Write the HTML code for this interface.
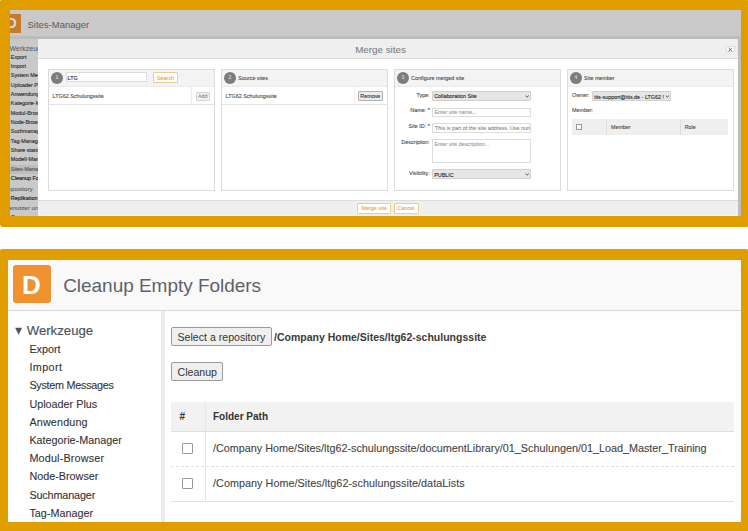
<!DOCTYPE html>
<html><head><meta charset="utf-8">
<style>
*{box-sizing:border-box;margin:0;padding:0}
html,body{width:748px;height:531px;overflow:hidden;background:#fff;font-family:"Liberation Sans",sans-serif}
.a{position:absolute}
.t{position:absolute;white-space:nowrap;line-height:1}
.full{position:absolute;left:0;top:0;width:748px;height:531px}
#c1{clip-path:inset(10px 7px 315px 10px);background:#c9c9c9;}
#c2{clip-path:inset(260px 7px 9px 8px);background:#fff}
.s2{font-size:10.8px;color:#333;-webkit-text-stroke:0.1px currentColor}
.s1{font-size:5.4px;color:#4a4a4a;-webkit-text-stroke:0.1px currentColor}
.sb{color:#333;-webkit-text-stroke:0.15px currentColor}
.lab{width:50px;text-align:right}
.pan{position:absolute;top:69px;width:167px;height:122px;border:1px solid #dcdcdc;background:#fff}
.phd{position:absolute;top:70px;width:165px;height:17px;background:#f3f3f3;border-bottom:1px dotted #e2e2e2}
.circ{position:absolute;top:72px;width:12px;height:12px;border-radius:50%;background:#7c7c7c}
.inp1{position:absolute;background:#fff;border:0.8px solid #dcdcdc}
.sel1{position:absolute;background:#e6e6e6;border:0.8px solid #d0d0d0;border-radius:1px}
.btn1o{position:absolute;background:#fff;border:0.9px solid #eccb94;border-radius:1px}
.rowl{position:absolute;height:1px;background:#e2e2e2}
.btn2{position:absolute;background:#efefef;border:1px solid #9a9a9a;border-radius:2px}
.cb2{position:absolute;width:11px;height:11px;border:1px solid #999;background:#fff;border-radius:1px}
</style></head><body>
<div class="a" style="left:0;top:0;width:748px;height:227px;background:#df9d00;border-radius:1.5px 1px 1.5px 3px"></div>
<div class="a" style="left:0;top:249px;width:748px;height:282px;background:#df9d00;border-radius:2px 1.5px 0 0"></div>

<div id="c1" class="full">
  <!-- header -->
  <div class="a" style="left:0;top:36px;width:748px;height:2.5px;background:#bcbcbc"></div>
  <div class="a" style="left:2.2px;top:13.6px;width:19px;height:19.3px;background:#c77a2b"></div>
  <div class="t" style="left:6.3px;top:16.4px;font-size:14.5px;font-weight:bold;color:#dcdcdc">D</div>
  <div class="t" style="left:27.5px;top:19.8px;font-size:9.5px;color:#595959">Sites-Manager</div>
  <!-- sidebar -->
  <div class="t" style="left:9.6px;top:44.8px;font-size:7px;color:#4d5561">Werkzeuge</div>
  <div class="t s1 sb" style="left:10.8px;top:54.5px">Export</div>
  <div class="t s1 sb" style="left:10.8px;top:63.8px">Import</div>
  <div class="t s1 sb" style="left:10.8px;top:73.2px">System Messages</div>
  <div class="t s1 sb" style="left:10.8px;top:82.5px">Uploader Plus</div>
  <div class="t s1 sb" style="left:10.8px;top:91.9px">Anwendung</div>
  <div class="t s1 sb" style="left:10.8px;top:101.2px">Kategorie-Manager</div>
  <div class="t s1 sb" style="left:10.8px;top:110.6px">Modul-Browser</div>
  <div class="t s1 sb" style="left:10.8px;top:119.9px">Node-Browser</div>
  <div class="t s1 sb" style="left:10.8px;top:129.3px">Suchmanager</div>
  <div class="t s1 sb" style="left:10.8px;top:138.6px">Tag-Manager</div>
  <div class="t s1 sb" style="left:10.8px;top:148px">Share stats</div>
  <div class="t s1 sb" style="left:10.8px;top:157.3px">Modell-Manager</div>
  <div class="a" style="left:0;top:165.2px;width:40px;height:8.5px;background:#bdbdbd"></div>
  <div class="t s1 sb" style="left:10.8px;top:166.7px;color:#555">Sites-Manager</div>
  <div class="t s1 sb" style="left:10.8px;top:176px;color:#1a1a1a">Cleanup Folders</div>
  <div class="t" style="left:3.1px;top:186.3px;font-size:6.2px;color:#5a6068;-webkit-text-stroke:0.1px currentColor">Repository</div>
  <div class="t s1 sb" style="left:10.8px;top:196.3px;color:#222">Replikation</div>
  <div class="t" style="left:5px;top:205.4px;font-size:6.2px;color:#5a6068;-webkit-text-stroke:0.1px currentColor">Benutzer und Gruppen</div>
  <div class="t s1 sb" style="left:10.8px;top:215.2px">Gruppen</div>
  <!-- dialog -->
  <div class="a" style="left:738px;top:37px;width:3px;height:190px;background:#bdbdbd"></div>
  <div class="a" style="left:38px;top:39px;width:700px;height:190px;background:#fff;border-radius:2px 2px 0 0;overflow:hidden">
    <div class="a" style="left:0;top:0;width:700px;height:19.5px;background:#efefef;border-bottom:1px solid #dcdcdc"></div>
    <div class="a" style="left:0;top:161px;width:700px;height:30px;background:#efefef;border-top:1px solid #dcdcdc"></div>
    <div class="a" style="left:0;top:176px;width:700px;height:1px;background:#f4f5fa"></div>
  </div>
  <div class="t" style="left:355.2px;top:44.6px;font-size:9.8px;color:#757575">Merge sites</div>
  <div class="a" style="left:725.6px;top:46.4px;width:9.5px;height:6px;background:#fff;border:1px solid #dadada;border-radius:1px"></div>
  <svg class="a" style="left:0;top:0" width="748" height="226"><path d="M728.6 48 L731.9 51.2 M731.9 48 L728.6 51.2" stroke="#555" stroke-width="0.9"/></svg>
  <!-- footer buttons -->
  <div class="btn1o" style="left:356.7px;top:202.5px;width:34.3px;height:11.8px"></div>
  <div class="t s1" style="left:361.5px;top:205.6px;color:#e3a84c">Merge site</div>
  <div class="btn1o" style="left:394px;top:202.5px;width:24.7px;height:11.8px"></div>
  <div class="t s1" style="left:397.6px;top:205.6px;color:#e3a84c">Cancel</div>
  <div class="pan" style="left:48px"></div>
  <div class="phd" style="left:49px"></div>
  <div class="circ" style="left:51px"></div>
  <div class="t s1" style="left:55.6px;top:74.8px;color:#dedede;font-size:5px">1</div>
  <div class="pan" style="left:221px"></div>
  <div class="phd" style="left:222px"></div>
  <div class="circ" style="left:224px"></div>
  <div class="t s1" style="left:228.6px;top:74.8px;color:#dedede;font-size:5px">2</div>
  <div class="pan" style="left:394px"></div>
  <div class="phd" style="left:395px"></div>
  <div class="circ" style="left:397px"></div>
  <div class="t s1" style="left:401.6px;top:74.8px;color:#dedede;font-size:5px">3</div>
  <div class="pan" style="left:567px"></div>
  <div class="phd" style="left:568px"></div>
  <div class="circ" style="left:570px"></div>
  <div class="t s1" style="left:574.6px;top:74.8px;color:#dedede;font-size:5px">4</div>

  <!-- panel 1 -->
  <div class="inp1" style="left:65.7px;top:72.4px;width:81.8px;height:10.1px"></div>
  <div class="t s1" style="left:67.6px;top:75.9px;color:#222">LTG</div>
  <div class="btn1o" style="left:152.8px;top:72px;width:25.2px;height:11.3px"></div>
  <div class="t s1" style="left:157px;top:75.8px;color:#e3a84c">Search</div>
  <div class="rowl" style="left:49px;top:104px;width:165px"></div>
  <div class="a" style="left:191px;top:87px;width:1px;height:17px;background:#ececec"></div>
  <div class="t s1" style="left:52.6px;top:93.7px">LTG62 Schulungssite</div>
  <div class="a" style="left:195.5px;top:91.5px;width:14.5px;height:9px;background:#f3f3f3;border:1px solid #d3d3d3;border-radius:1px"></div>
  <div class="t s1" style="left:198px;top:93.8px;color:#8a8a8a">Add</div>
  <!-- panel 2 -->
  <div class="t s1" style="left:238.3px;top:75.8px">Source sites</div>
  <div class="rowl" style="left:222px;top:104px;width:165px"></div>
  <div class="a" style="left:354px;top:87px;width:1px;height:17px;background:#ececec"></div>
  <div class="t s1" style="left:225.6px;top:93.7px">LTG62 Schulungssite</div>
  <div class="a" style="left:358px;top:91.2px;width:24.8px;height:9.6px;background:#ececec;border:1px solid #b0b0b0;border-radius:1px"></div>
  <div class="t s1" style="left:360.3px;top:93.8px;color:#333">Remove</div>
  <!-- panel 3 -->
  <div class="t s1" style="left:411.1px;top:75.8px">Configure merged site</div>
  <div class="t s1 lab" style="left:379.8px;top:93px">Type:</div>
  <div class="t s1 lab" style="left:379.8px;top:108.2px">Name: *</div>
  <div class="t s1 lab" style="left:379.8px;top:124.1px">Site ID: *</div>
  <div class="t s1 lab" style="left:379.8px;top:140.1px">Description:</div>
  <div class="t s1 lab" style="left:379.8px;top:170.9px">Visibility:</div>
  <div class="sel1" style="left:432.2px;top:91.3px;width:98.5px;height:9.9px"></div>
  <div class="t s1" style="left:434.2px;top:94px;color:#222">Collaboration Site</div>
  <div class="inp1" style="left:432.2px;top:107.5px;width:98.5px;height:9px"></div>
  <div class="t s1" style="left:434.4px;top:109.5px;color:#9a9a9a">Enter site name...</div>
  <div class="inp1" style="left:432.2px;top:123px;width:98.5px;height:9.5px;overflow:hidden"><div class="t s1" style="left:1.8px;top:2.2px;color:#8a8a8a">This is part of the site address. Use numbers</div></div>
  <div class="inp1" style="left:432.2px;top:138.8px;width:98.5px;height:24.5px"></div>
  <div class="t s1" style="left:434.4px;top:142.4px;color:#9a9a9a">Enter site description...</div>
  <div class="sel1" style="left:432.2px;top:169.3px;width:98.5px;height:9.8px"></div>
  <div class="t s1" style="left:434.2px;top:172.5px;color:#222">PUBLIC</div>
  <!-- panel 4 -->
  <div class="t s1" style="left:584.1px;top:75.8px">Site member</div>
  <div class="t s1" style="left:572.1px;top:92.5px">Owner:</div>
  <div class="sel1" style="left:592px;top:91px;width:78.8px;height:10.3px;overflow:hidden"><div class="t s1" style="left:1.2px;top:2.5px;color:#222">itis-support@itis.de - LTG62 !</div></div>
  <div class="t s1" style="left:572.1px;top:108.2px">Member:</div>
  <div class="a" style="left:572.1px;top:119.4px;width:156.4px;height:16.1px;background:#efefef"></div>
  <div class="a" style="left:606.3px;top:119.4px;width:0.6px;height:16.1px;background:#dedede"></div>
  <div class="a" style="left:680.2px;top:119.4px;width:0.6px;height:16.1px;background:#dedede"></div>
  <div class="a" style="left:576px;top:124px;width:6px;height:6px;border:1px solid #9a9a9a;background:#fff"></div>
  <div class="t s1" style="left:610.9px;top:124.7px">Member</div>
  <div class="t s1" style="left:684.7px;top:124.7px">Role</div>
  <svg class="a" style="left:0;top:0" width="748" height="226" fill="none" stroke="#555" stroke-width="1">
    <path d="M525.6 95.6 L527.2 97.1 L528.8 95.6"/>
    <path d="M525.6 173.6 L527.2 175.1 L528.8 173.6"/>
    <path d="M665.8 95.6 L667.4 97.1 L669 95.6"/>
  </svg>
</div>

<div id="c2" class="full">
  <!-- header -->
  <div class="a" style="left:0;top:260px;width:748px;height:51px;background:#f9f9f9;border-bottom:1px solid #d9d9d9"></div>
  <div class="a" style="left:0;top:311px;width:748px;height:2px;background:#fcfcfc"></div>
  <div class="a" style="left:13px;top:265px;width:38px;height:38px;background:#f0922f;border-radius:3px"></div>
  <div class="t" style="left:22px;top:272px;font-size:26px;font-weight:bold;color:#fff">D</div>
  <div class="t" style="left:63.2px;top:275.8px;font-size:19px;letter-spacing:-0.035px;color:#5d6269">Cleanup Empty Folders</div>
  <!-- sidebar -->
  <div class="a" style="left:161px;top:311px;width:3.6px;height:230px;background:#ececec"></div>
  <svg class="a" style="left:0;top:0" width="748" height="531"><polygon points="15.1,327.8 22.1,327.8 18.6,334.8" fill="#4d5561"/></svg>
  <div class="t" style="left:26.7px;top:323.5px;font-size:13.2px;color:#4d5561;-webkit-text-stroke:0.2px currentColor">Werkzeuge</div>
  <div class="t s2" style="left:29.4px;top:344px">Export</div>
  <div class="t s2" style="left:29.4px;top:362.2px;letter-spacing:0.4px;">Import</div>
  <div class="t s2" style="left:29.4px;top:380.4px;letter-spacing:-0.26px;">System Messages</div>
  <div class="t s2" style="left:29.4px;top:398.6px">Uploader Plus</div>
  <div class="t s2" style="left:29.4px;top:416.8px;letter-spacing:0.15px;">Anwendung</div>
  <div class="t s2" style="left:29.4px;top:435px">Kategorie-Manager</div>
  <div class="t s2" style="left:29.4px;top:453.2px;letter-spacing:0.17px;">Modul-Browser</div>
  <div class="t s2" style="left:29.4px;top:471.4px">Node-Browser</div>
  <div class="t s2" style="left:29.4px;top:489.6px;letter-spacing:-0.13px;">Suchmanager</div>
  <div class="t s2" style="left:29.4px;top:507.8px">Tag-Manager</div>
  <!-- main -->
  <div class="btn2" style="left:171px;top:327px;width:101px;height:19px"></div>
  <div class="t" style="left:177.5px;top:331.9px;font-size:10.6px;color:#333">Select a repository</div>
  <div class="t" style="left:274px;top:331.9px;font-size:10.5px;font-weight:bold;color:#3a3a3a">/Company Home/Sites/ltg62-schulungssite</div>
  <div class="btn2" style="left:171px;top:362px;width:52px;height:19px"></div>
  <div class="t" style="left:177.5px;top:366.9px;font-size:10.6px;color:#333">Cleanup</div>
  <!-- table -->
  <div class="a" style="left:171.3px;top:402px;width:562.7px;height:29.5px;background:#f2f2f2;border-bottom:1px solid #dedede"></div>
  <div class="a" style="left:205px;top:402px;width:1px;height:99px;background:#e6e6e6"></div>
  <div class="a" style="left:171.3px;top:466px;width:562.7px;height:0;border-top:1px dashed #e0e0e0"></div>
  <div class="a" style="left:171.3px;top:501px;width:562.7px;height:1px;background:#e3e3e3"></div>
  <div class="t" style="left:179.5px;top:412.2px;font-size:10px;font-weight:bold;color:#333">#</div>
  <div class="t" style="left:213px;top:412.2px;font-size:10px;font-weight:bold;color:#333">Folder Path</div>
  <div class="cb2" style="left:182px;top:442.5px"></div>
  <div class="cb2" style="left:182px;top:477.5px"></div>
  <div class="t s2" style="left:213px;top:443px;color:#444">/Company Home/Sites/ltg62-schulungssite/documentLibrary/01_Schulungen/01_Load_Master_Training</div>
  <div class="t s2" style="left:213px;top:478px;color:#444;letter-spacing:0.04px">/Company Home/Sites/ltg62-schulungssite/dataLists</div>
</div>
</body></html>
